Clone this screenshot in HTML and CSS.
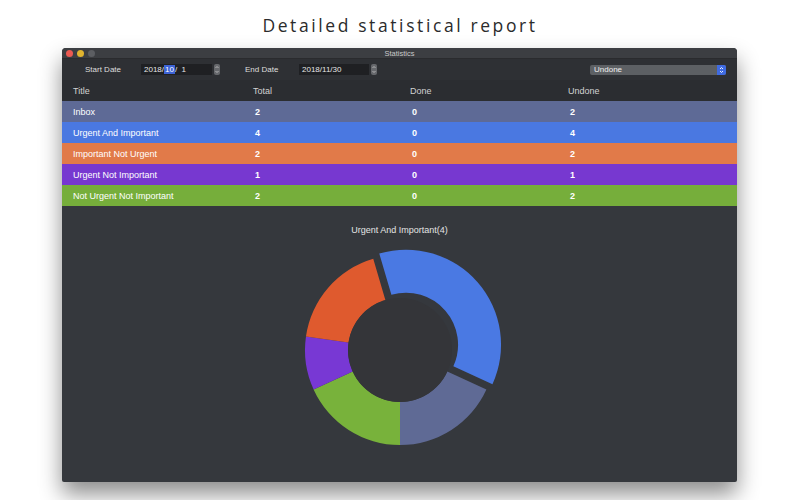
FILE: index.html
```html
<!DOCTYPE html>
<html>
<head>
<meta charset="utf-8">
<link rel="stylesheet" href="styles.css">
</head>
<body>
<div class="page">
  <h1 class="headline">Detailed statistical report</h1>
  <div class="window">
    <div class="titlebar">
      <div class="lights">
        <span class="light red"></span>
        <span class="light yellow"></span>
        <span class="light gray"></span>
      </div>
      <div class="wtitle">Statistics</div>
      <div></div>
    </div>
    <div class="toolbar">
      <span class="label label-start">Start Date</span>
      <span class="field field-start">2018/<span class="sel">10</span>/&nbsp; 1</span>
      <span class="stepper"><svg viewBox="0 0 6 11" width="6" height="11"><path d="M1.5 4 L3 2.5 L4.5 4 M1.5 7 L3 8.5 L4.5 7" fill="none" stroke="#c8c8c8" stroke-width="0.8"/></svg></span>
      <span class="label label-end">End Date</span>
      <span class="field field-end">2018/11/30</span>
      <span class="stepper"><svg viewBox="0 0 6 11" width="6" height="11"><path d="M1.5 4 L3 2.5 L4.5 4 M1.5 7 L3 8.5 L4.5 7" fill="none" stroke="#c8c8c8" stroke-width="0.8"/></svg></span>
      <span class="spacer"></span>
      <span class="popup"><span class="popup-text">Undone</span><span class="popup-cap"><svg viewBox="0 0 9 10" width="9" height="10"><path d="M3 4 L4.5 2.5 L6 4 M3 6 L4.5 7.5 L6 6" fill="none" stroke="#ffffff" stroke-width="0.9"/></svg></span></span>
    </div>
    <div class="table">
      <div class="row head"><div>Title</div><div>Total</div><div>Done</div><div>Undone</div></div>
      <div class="row inbox"><div>Inbox</div><div class="num">2</div><div class="num">0</div><div class="num">2</div></div>
      <div class="row ui"><div>Urgent And Important</div><div class="num">4</div><div class="num">0</div><div class="num">4</div></div>
      <div class="row inu"><div>Important Not Urgent</div><div class="num">2</div><div class="num">0</div><div class="num">2</div></div>
      <div class="row uni"><div>Urgent Not Important</div><div class="num">1</div><div class="num">0</div><div class="num">1</div></div>
      <div class="row nuni"><div>Not Urgent Not Important</div><div class="num">2</div><div class="num">0</div><div class="num">2</div></div>
    </div>
    <div class="chart">
      <div class="chart-title">Urgent And Important(4)</div>
      <svg class="donut" viewBox="0 0 220 220" width="220" height="220">
        <path class="seg-blue" d="M 89.29 13.61 A 95 95 0 0 1 202.46 144.22 L 163.35 126.36 A 52 52 0 0 0 101.40 54.87 Z"/>
        <path class="seg-slate" d="M 196.41 149.46 A 95 95 0 0 1 110 205 L 110 162 A 52 52 0 0 0 157.30 131.60 Z"/>
        <path class="seg-green" d="M 110 205 A 95 95 0 0 1 23.59 149.46 L 62.70 131.60 A 52 52 0 0 0 110 162 Z"/>
        <path class="seg-purple" d="M 23.59 149.46 A 95 95 0 0 1 15.97 96.48 L 58.53 102.60 A 52 52 0 0 0 62.70 131.60 Z"/>
        <path class="seg-orange" d="M 15.97 96.48 A 95 95 0 0 1 83.24 18.85 L 95.35 60.11 A 52 52 0 0 0 58.53 102.60 Z"/>
        <circle class="hole" cx="110" cy="110" r="52"/>
      </svg>
    </div>
  </div>
</div>
</body>
</html>
```

FILE: styles.css
```css
* { box-sizing: border-box; }
html, body { margin: 0; padding: 0; }
body {
  width: 800px;
  height: 500px;
  overflow: hidden;
  background: #ffffff;
  font-family: "Liberation Sans", Arial, sans-serif;
}
.page {
  display: flex;
  flex-direction: column;
}
.headline {
  margin: 0;
  height: 48px;
  display: flex;
  align-items: center;
  justify-content: center;
  padding-top: 1px;
  font-family: "Open Sans", sans-serif;
  font-weight: 400;
  font-size: 17.5px;
  letter-spacing: 2.6px;
  color: #2b2b2b;
}
.window {
  margin-left: 62px;
  width: 675px;
  height: 434px;
  border-radius: 4px 4px 2px 2px;
  overflow: hidden;
  background: #35383d;
  box-shadow: 0 12px 22px rgba(0, 0, 0, 0.45);
  display: flex;
  flex-direction: column;
}
.titlebar {
  height: 11px;
  background: #3c3e42;
  border-bottom: 1px solid #2a2b2e;
  display: grid;
  grid-template-columns: 1fr auto 1fr;
  align-items: center;
}
.lights {
  display: flex;
  gap: 4px;
  padding-left: 4px;
}
.light {
  width: 7px;
  height: 7px;
  border-radius: 50%;
}
.red { background: #ec5a52; }
.yellow { background: #e0b42f; }
.gray { background: #5c5e62; }
.wtitle {
  font-size: 7.5px;
  color: #c9c9c9;
}
.toolbar {
  height: 21px;
  background: #2e3034;
  display: flex;
  align-items: center;
  padding-left: 23px;
  padding-right: 11px;
  font-size: 8px;
  color: #dedede;
}
.label-start { width: 56px; }
.label-end { width: 54px; margin-left: 25px; }
.field {
  height: 11px;
  background: #1f2023;
  display: flex;
  align-items: center;
  padding-left: 3px;
  color: #e6e6e6;
}
.field-start { width: 71px; }
.field-end { width: 70px; }
.sel {
  background: #3d63d6;
  color: #ffffff;
  padding: 0 1px;
}
.stepper {
  margin-left: 2px;
  width: 6px;
  height: 11px;
  border-radius: 2px;
  background: #66686c;
  display: flex;
}
.spacer { flex: 1; }
.popup {
  width: 136px;
  height: 10px;
  background: #5d6064;
  border-radius: 2px;
  display: flex;
  align-items: center;
  overflow: hidden;
}
.popup-text {
  flex: 1;
  padding-left: 4px;
  color: #efefef;
  font-size: 8px;
}
.popup-cap {
  width: 9px;
  height: 10px;
  background: #3f6be2;
  display: flex;
}
.table {
  display: flex;
  flex-direction: column;
}
.row {
  height: 21px;
  display: grid;
  grid-template-columns: 180px 157px 158px 1fr;
  align-items: center;
  padding-left: 11px;
  font-size: 9px;
  color: #ffffff;
}
.row .num {
  font-weight: bold;
  padding-left: 2px;
}
.head {
  background: #2b2d31;
  color: #d2d2d2;
}
.inbox { background: #5e6a96; }
.ui { background: #4a78e1; }
.inu { background: #e17a49; }
.uni { background: #7738d0; }
.nuni { background: #76ae3b; }
.chart {
  flex: 1;
  display: flex;
  flex-direction: column;
  align-items: center;
  padding-top: 18px;
}
.chart-title {
  height: 12px;
  line-height: 12px;
  font-size: 9px;
  color: #e4e4e4;
}
.donut {
  margin-top: 4px;
}
.seg-blue { fill: #4a79e3; }
.seg-slate { fill: #5f6a95; }
.seg-green { fill: #78b23b; }
.seg-purple { fill: #7838d4; }
.seg-orange { fill: #df5a2e; }
.hole { fill: #343539; }
```
